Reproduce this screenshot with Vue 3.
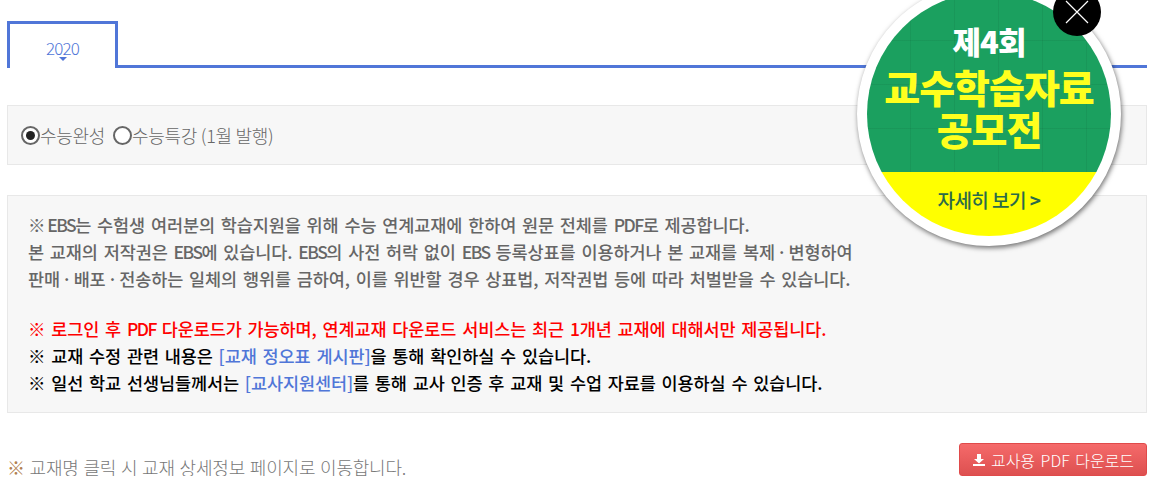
<script setup>
</script>

<template>
  <div class="page">
    <div class="tabs">
      <div class="tab">2020<span class="caret"></span></div>
    </div>

    <div class="filter">
      <span class="radio on"></span><span>수능완성</span>
      <span class="radio second"></span><span>수능특강 (1월 발행)</span>
    </div>

    <div class="info">
      <p class="grey"><span class="tight">※ </span><span class="en">EBS</span>는 수험생 여러분의 학습지원을 위해 수능 연계교재에 한하여 원문 전체를 <span class="en">PDF</span>로 제공합니다.</p>
      <p class="grey">본 교재의 저작권은 <span class="en">EBS</span>에 있습니다. <span class="en">EBS</span>의 사전 허락 없이 <span class="en">EBS</span> 등록상표를 이용하거나 본 교재를 복제<span class="tight"> · </span>변형하여</p>
      <p class="grey">판매<span class="tight"> · </span>배포<span class="tight"> · </span>전송하는 일체의 행위를 금하여, 이를 위반할 경우 상표법, 저작권법 등에 따라 처벌받을 수 있습니다.</p>
      <p class="gap red">※ 로그인 후 <span class="en">PDF</span> 다운로드가 가능하며, 연계교재 다운로드 서비스는 최근 1개년 교재에 대해서만 제공됩니다.</p>
      <p>※ 교재 수정 관련 내용은 <a>[교재 정오표 게시판]</a>을 통해 확인하실 수 있습니다.</p>
      <p>※ 일선 학교 선생님들께서는 <a>[교사지원센터]</a>를 통해 교사 인증 후 교재 및 수업 자료를 이용하실 수 있습니다.</p>
    </div>

    <div class="bottom">
      <div class="note"><span class="mark">※</span> 교재명 클릭 시 교재 상세정보 페이지로 이동합니다.</div>
      <button class="pdf">
        <svg width="14" height="14" viewBox="0 0 14 14"><path d="M5 1h4v5h3L7 10.5 2 6h3z" fill="#fff"/><path d="M1 11h12v2H1z" fill="#fff"/></svg>
        교사용 PDF 다운로드
      </button>
    </div>

    <div class="promo">
      <div class="disc">
        <div class="green">
          <div class="t1">제4회</div>
          <div class="t2">교수학습자료</div>
          <div class="t3">공모전</div>
        </div>
        <div class="yellow">자세히 보기 <b>&gt;</b></div>
      </div>
      <div class="close">
        <svg width="24" height="24" viewBox="0 0 24 24"><path d="M1 1l22 22M23 1L1 23" stroke="#fff" stroke-width="1.2" fill="none"/></svg>
      </div>
    </div>
  </div>
</template>

<style>
html, body { margin: 0; background: #fff; overflow: hidden; }
</style>

<style scoped>
.page {
  position: relative;
  width: 1140px;
  height: 455px;
  padding: 21px 0 0 7px;
  overflow: hidden;
  font-family: "Noto Sans CJK KR", "Noto Sans", sans-serif;
  color: #666;
}
.tabs {
  box-sizing: border-box;
  height: 47px;
  border-bottom: 3px solid #5076d8;
  display: flex;
}
.tab {
  box-sizing: border-box;
  position: relative;
  width: 111px;
  height: 47px;
  border: 3px solid #5076d8;
  border-bottom: 0;
  background: #fff;
  color: #5076d8;
  font-size: 17px;
  letter-spacing: -0.9px;
  line-height: 48px;
  text-align: center;
  font-weight: 300;
}
.caret {
  position: absolute;
  left: 50%;
  top: 33px;
  margin-left: -4px;
  border: 4px solid transparent;
  border-top: 4px solid #5076d8;
  border-bottom: 0;
}
.filter {
  margin-top: 37px;
  height: 58px;
  border: 1px solid #e8e8e8;
  background: #f7f7f7;
  display: flex;
  align-items: center;
  padding-left: 13px;
  font-size: 18px;
  font-weight: 300;
  letter-spacing: -0.3px;
  color: #666;
}
.radio {
  box-sizing: border-box;
  width: 19px;
  height: 19px;
  border: 2px solid #666;
  border-radius: 50%;
  background: #fff;
  position: relative;
}
.radio.second { margin-left: 8px; }
.radio.on::after {
  content: "";
  position: absolute;
  left: 3px;
  top: 3px;
  width: 9px;
  height: 9px;
  border-radius: 50%;
  background: #222;
}
.info {
  margin-top: 30px;
  height: 189px;
  border: 1px solid #e8e8e8;
  background: #f7f7f7;
  padding: 15px 0 12px 20px;
  font-size: 17.5px;
  font-weight: 500;
  line-height: 27px;
  letter-spacing: -0.1px;
  word-spacing: 2px;
  color: #000;
}
.info p { margin: 0; white-space: nowrap; }
.info .grey { color: #666; }
.info .red { color: #f00; }
.info .gap { margin-top: 23px; }
.info a { color: #5076d8; }
.en { letter-spacing: -1.5px; }
.tight { word-spacing: -2px; }
.bottom {
  margin-top: 30px;
  display: flex;
  justify-content: space-between;
  align-items: flex-start;
}
.note {
  margin-top: 11px;
  font-size: 18px;
  font-weight: 300;
  line-height: 27px;
  letter-spacing: -0.2px;
  word-spacing: 1px;
  color: #777;
}
.mark { color: #b08050; }
.pdf {
  box-sizing: border-box;
  width: 188px;
  height: 33px;
  border: 1px solid #e04a4a;
  border-radius: 3px;
  background: linear-gradient(#f56a6a, #dd5050);
  color: #fff;
  font-family: inherit;
  font-size: 16px;
  font-weight: 300;
  word-spacing: 2px;
  display: flex;
  align-items: center;
  justify-content: center;
  gap: 5px;
  padding: 0;
}
.promo {
  position: absolute;
  left: 857px;
  top: -18px;
  width: 264px;
  height: 264px;
}
.disc {
  box-sizing: border-box;
  width: 264px;
  height: 264px;
  border: 10px solid #fff;
  border-radius: 50%;
  background: #fff;
  box-shadow: 1px 2px 5px rgba(0, 0, 0, 0.55);
  overflow: hidden;
  display: flex;
  flex-direction: column;
}
.disc > * { flex: none; }
.green {
  height: 180px;
  background: #1ba05f;
  background-image:
    repeating-linear-gradient(90deg, transparent 0 43px, rgba(0,0,0,0.06) 43px 44px),
    repeating-linear-gradient(0deg, transparent 0 43px, rgba(0,0,0,0.06) 43px 44px);
  text-align: center;
  font-weight: 900;
}
.t1 {
  padding-top: 34px;
  color: #fff;
  font-size: 31px;
  line-height: 30px;
  letter-spacing: -1px;
}
.t2, .t3 {
  color: #ffff1e;
  font-size: 39px;
  line-height: 42px;
  letter-spacing: -1px;
}
.t2 { margin-top: 9px; }
.yellow {
  height: 74px;
  background: #ffff00;
  color: #2b6a4a;
  text-align: center;
  font-size: 19px;
  font-weight: 500;
  line-height: 56px;
  letter-spacing: -0.5px;
}
.close {
  position: absolute;
  left: 196px;
  top: 6px;
  width: 48px;
  height: 48px;
  border-radius: 50%;
  background: #000;
  display: flex;
  align-items: center;
  justify-content: center;
}
</style>
